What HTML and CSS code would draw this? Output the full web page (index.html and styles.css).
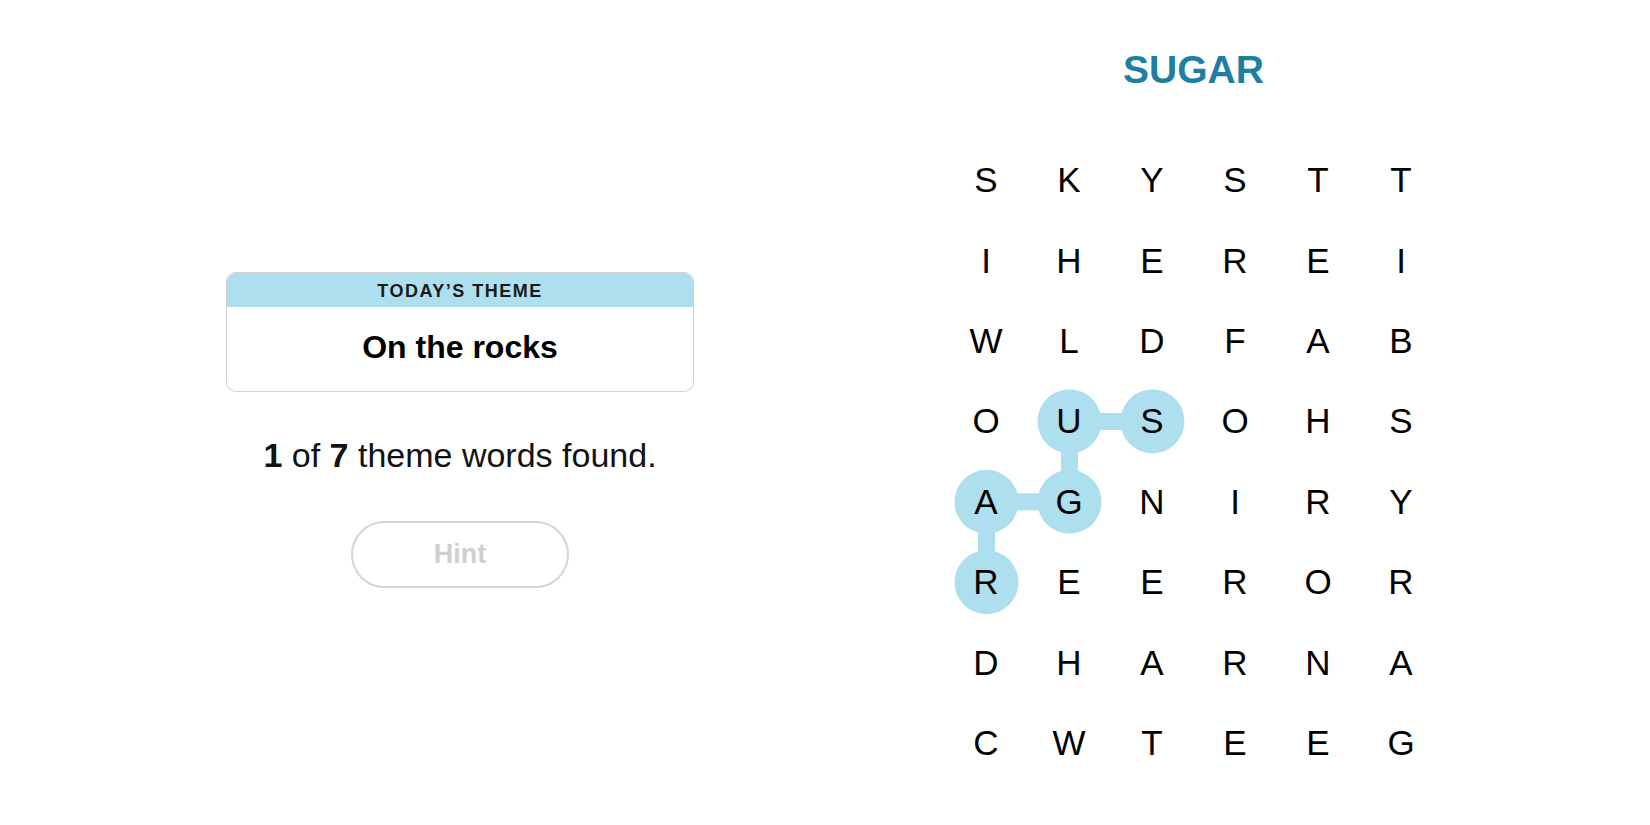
FILE: index.html
```html
<!DOCTYPE html>
<html lang="en">
<head>
<meta charset="utf-8">
<title>Strands</title>
<link rel="stylesheet" href="styles.css">
</head>
<body>
<main class="game">
  <section class="info">
    <div class="theme-card">
      <div class="theme-label">TODAY’S THEME</div>
      <div class="theme-text">On the rocks</div>
    </div>
    <p class="progress"><b>1</b> of <b>7</b> theme words found.</p>
    <button class="hint" type="button" disabled>Hint</button>
  </section>
  <section class="play">
    <h1 class="found-word">SUGAR</h1>
    <div class="board">
      <svg class="paths" width="498" height="643" viewBox="0 0 498 643" aria-hidden="true">
        <g stroke="#aedfee" stroke-width="17" stroke-linecap="butt">
          <line x1="124.5" y1="281.4" x2="207.5" y2="281.4"/>
          <line x1="124.5" y1="281.4" x2="124.5" y2="361.8"/>
          <line x1="124.5" y1="361.8" x2="41.5" y2="361.8"/>
          <line x1="41.5" y1="361.8" x2="41.5" y2="442.2"/>
        </g>
        <g fill="#aedfee">
          <circle cx="124.5" cy="281.4" r="32"/>
          <circle cx="207.5" cy="281.4" r="32"/>
          <circle cx="124.5" cy="361.8" r="32"/>
          <circle cx="41.5" cy="361.8" r="32"/>
          <circle cx="41.5" cy="442.2" r="32"/>
        </g>
      </svg>
      <div class="grid">
        <span>S</span><span>K</span><span>Y</span><span>S</span><span>T</span><span>T</span>
        <span>I</span><span>H</span><span>E</span><span>R</span><span>E</span><span>I</span>
        <span>W</span><span>L</span><span>D</span><span>F</span><span>A</span><span>B</span>
        <span>O</span><span>U</span><span>S</span><span>O</span><span>H</span><span>S</span>
        <span>A</span><span>G</span><span>N</span><span>I</span><span>R</span><span>Y</span>
        <span>R</span><span>E</span><span>E</span><span>R</span><span>O</span><span>R</span>
        <span>D</span><span>H</span><span>A</span><span>R</span><span>N</span><span>A</span>
        <span>C</span><span>W</span><span>T</span><span>E</span><span>E</span><span>G</span>
      </div>
    </div>
  </section>
</main>
</body>
</html>
```
FILE: styles.css
```css
html, body {
  margin: 0;
  padding: 0;
  background: #ffffff;
}

body {
  font-family: "Liberation Sans", Arial, sans-serif;
  color: #121212;
  width: 1650px;
  height: 825px;
  overflow: hidden;
}

.game {
  display: flex;
  align-items: flex-start;
  padding-top: 46px;
  padding-left: 226px;
  gap: 250.5px;
}

.info {
  width: 468px;
  margin-top: 226px;
  display: flex;
  flex-direction: column;
  align-items: center;
}

.theme-card {
  width: 468px;
  height: 120px;
  box-sizing: border-box;
  border: 1px solid #d2d2d2;
  border-radius: 10px;
  overflow: hidden;
  display: flex;
  flex-direction: column;
}

.theme-label {
  height: 35px;
  box-sizing: border-box;
  padding-top: 3px;
  margin: -1px -1px 0;
  background: #aedfee;
  display: flex;
  align-items: center;
  justify-content: center;
  font-size: 18px;
  font-weight: 700;
  letter-spacing: 1.5px;
  color: #1a1a1a;
}

.theme-text {
  flex: 1;
  display: flex;
  align-items: center;
  justify-content: center;
  padding-bottom: 3px;
  font-size: 32px;
  font-weight: 700;
  color: #000;
}

.progress {
  margin: 43px 0 0;
  height: 40px;
  line-height: 40px;
  font-size: 34px;
  color: #121212;
  white-space: nowrap;
}

.progress b {
  font-weight: 700;
}

.hint {
  margin-top: 46px;
  width: 218px;
  height: 67px;
  border: 2px solid #d4d4d4;
  border-radius: 34px;
  background: #fff;
  font-family: "Liberation Sans", Arial, sans-serif;
  font-size: 27px;
  font-weight: 700;
  color: #cfcfcf;
  padding: 0;
}

.play {
  width: 498px;
  display: flex;
  flex-direction: column;
  align-items: center;
}

.found-word {
  margin: 0;
  height: 48px;
  line-height: 48px;
  font-size: 39px;
  font-weight: 700;
  color: #1f7fa2;
}

.board {
  position: relative;
  margin-top: 46px;
  width: 498px;
  height: 643px;
}

.paths {
  position: absolute;
  left: 0;
  top: 0;
}

.grid {
  position: relative;
  display: grid;
  grid-template-columns: repeat(6, 83px);
  grid-template-rows: repeat(8, 80.4px);
}

.grid span {
  display: flex;
  align-items: center;
  justify-content: center;
  font-size: 35px;
  color: #000;
}
```
